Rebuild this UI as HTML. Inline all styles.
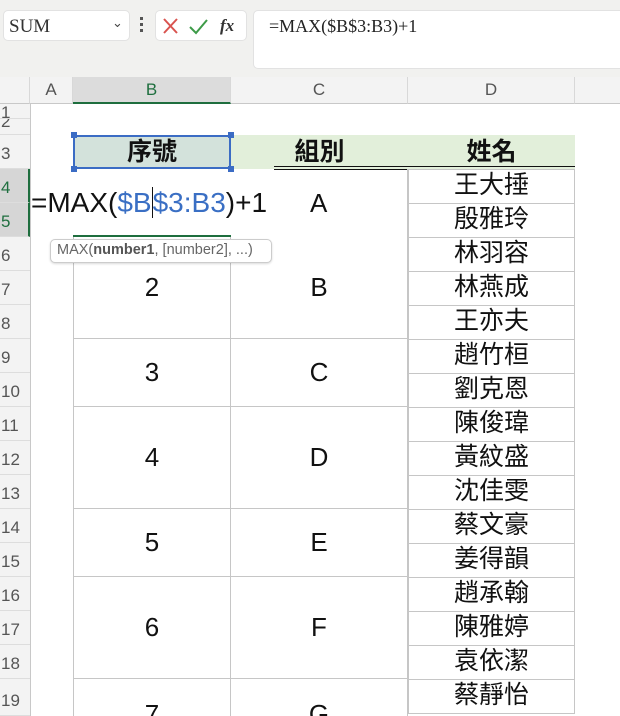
<!DOCTYPE html>
<html style="width:620px;height:716px;overflow:hidden"><head><meta charset="utf-8"><style>
*{margin:0;padding:0;box-sizing:border-box}
body{width:620px;height:716px;overflow:hidden;background:#fff;font-family:"Liberation Sans","Noto Sans CJK TC",sans-serif;position:relative}
.a{position:absolute}
.top{left:0;top:0;width:620px;height:77px;background:#f1f1ef}
.rh{left:0;width:30px;background:#f3f3f3;color:#555;font-size:17px;padding-left:1px;border-bottom:1px solid #ddd;display:flex;align-items:flex-end;padding-bottom:4px;overflow:hidden}
.ch{top:77px;height:27px;background:#f3f3f3;border-right:1px solid #d8d8d8;border-bottom:1px solid #c8c8c8;color:#555;font-size:17px;text-align:center;line-height:26px}
.nm{left:408px;width:167px;height:35px;border:1px solid #c6c6c6;text-align:center;font-size:25px;line-height:30px;color:#111}
.g{border-right:1px solid #c6c6c6;border-bottom:1px solid #c6c6c6;text-align:center;font-size:26px;color:#111;display:flex;align-items:center;justify-content:center}
.hd{top:135px;height:34px;font-size:25px;font-weight:bold;text-align:center;line-height:34px;color:#111}
.hs{width:6px;height:6px;background:#3b6cc4}
</style></head><body>
<div class="a top"></div>
<div class="a" style="left:3px;top:10px;width:127px;height:31px;background:#fff;border-radius:5px;border:1px solid #e2e2e2"></div>
<div class="a" style="left:9px;top:16px;font-family:'Liberation Serif',serif;font-size:19px;color:#333">SUM</div>
<div class="a" style="left:112px;top:15px;font-size:13px;color:#444">&#8964;</div>
<div class="a" style="left:140px;top:17px;width:3px;height:15px;border-left:3px dotted #555"></div>
<div class="a" style="left:155px;top:10px;width:92px;height:31px;background:#fff;border-radius:5px;border:1px solid #e2e2e2"></div>
<svg class="a" style="left:162px;top:16px" width="80" height="20"><path d="M2 3 L15 17 M15 3 L2 17" stroke="#d9534f" stroke-width="2"/><path d="M28 11 L34 17 L45 4" stroke="#3d9b48" stroke-width="2" fill="none"/><text x="58" y="15" font-family="Liberation Serif" font-style="italic" font-weight="bold" font-size="17" fill="#333">fx</text></svg>
<div class="a" style="left:253px;top:10px;width:380px;height:59px;background:#fff;border-radius:5px;border:1px solid #e2e2e2"></div>
<div class="a" style="left:269px;top:16px;font-family:'Liberation Serif',serif;font-size:18px;color:#222">=MAX($B$3:B3)+1</div>

<div class="a" style="left:0;top:77px;width:30px;height:27px;background:#f3f3f3;border-right:1px solid #d8d8d8;border-bottom:1px solid #c8c8c8"></div>
<div class="a ch" style="left:30px;width:43px">A</div>
<div class="a ch" style="left:73px;width:158px;background:#dcdcdc;color:#1f6f3f;border-bottom:2px solid #1e6e3e">B</div>
<div class="a ch" style="left:231px;width:177px">C</div>
<div class="a ch" style="left:408px;width:167px">D</div>
<div class="a ch" style="left:575px;width:45px;border-right:none"></div>

<div class="a rh" style="top:104px;height:15px;align-items:flex-start;padding-bottom:0"><span style="margin-top:-1px">1</span></div>
<div class="a rh" style="top:119px;height:16px;align-items:flex-start;padding-bottom:0"><span style="margin-top:-7px">2</span></div>
<div class="a rh" style="top:135px;height:34px">3</div>
<div class="a rh" style="top:169px;height:34px;background:#d6d6d6;color:#1f6f3f;border-right:2px solid #1e6e3e">4</div>
<div class="a rh" style="top:203px;height:34px;background:#d6d6d6;color:#1f6f3f;border-right:2px solid #1e6e3e">5</div>
<div class="a rh" style="top:237px;height:34px">6</div>
<div class="a rh" style="top:271px;height:34px">7</div>
<div class="a rh" style="top:305px;height:34px">8</div>
<div class="a rh" style="top:339px;height:34px">9</div>
<div class="a rh" style="top:373px;height:34px">10</div>
<div class="a rh" style="top:407px;height:34px">11</div>
<div class="a rh" style="top:441px;height:34px">12</div>
<div class="a rh" style="top:475px;height:34px">13</div>
<div class="a rh" style="top:509px;height:34px">14</div>
<div class="a rh" style="top:543px;height:34px">15</div>
<div class="a rh" style="top:577px;height:34px">16</div>
<div class="a rh" style="top:611px;height:34px">17</div>
<div class="a rh" style="top:645px;height:34px">18</div>
<div class="a rh" style="top:679px;height:37px">19</div>
<div class="a" style="left:30px;top:104px;width:1px;height:612px;background:#c8c8c8"></div>

<div class="a hd" style="left:73px;width:158px;background:#d3e2db">序號</div>
<div class="a hd" style="left:231px;width:177px;background:#e2efda">組別</div>
<div class="a hd" style="left:408px;width:167px;background:#e2efda">姓名</div>
<div class="a" style="left:274px;top:166px;width:301px;height:4px;border-top:1px solid #111;border-bottom:1px solid #111"></div>
<div class="a" style="left:73px;top:135px;width:158px;height:34px;border:2px solid #3b6cc4"></div>
<div class="a hs" style="left:71px;top:132px"></div><div class="a hs" style="left:228px;top:132px"></div>
<div class="a hs" style="left:71px;top:166px"></div><div class="a hs" style="left:228px;top:166px"></div>

<div class="a g" style="left:73px;top:237px;width:158px;height:102px;border-left:1px solid #c6c6c6">2</div>
<div class="a g" style="left:231px;top:237px;width:177px;height:102px">B</div>
<div class="a g" style="left:73px;top:339px;width:158px;height:68px;border-left:1px solid #c6c6c6">3</div>
<div class="a g" style="left:231px;top:339px;width:177px;height:68px">C</div>
<div class="a g" style="left:73px;top:407px;width:158px;height:102px;border-left:1px solid #c6c6c6">4</div>
<div class="a g" style="left:231px;top:407px;width:177px;height:102px">D</div>
<div class="a g" style="left:73px;top:509px;width:158px;height:68px;border-left:1px solid #c6c6c6">5</div>
<div class="a g" style="left:231px;top:509px;width:177px;height:68px">E</div>
<div class="a g" style="left:73px;top:577px;width:158px;height:102px;border-left:1px solid #c6c6c6">6</div>
<div class="a g" style="left:231px;top:577px;width:177px;height:102px">F</div>
<div class="a g" style="left:73px;top:679px;width:158px;height:37px;border-left:1px solid #c6c6c6;border-bottom:none;align-items:flex-start;padding-top:20px">7</div>
<div class="a g" style="left:231px;top:679px;width:177px;height:37px;border-bottom:none;align-items:flex-start;padding-top:20px">G</div>
<div class="a" style="left:231px;top:169px;width:177px;height:68px;border-right:1px solid #c6c6c6"></div>
<div class="a" style="left:310px;top:188px;font-size:26px;color:#111">A</div>

<div class="a nm" style="top:169px">王大捶</div>
<div class="a nm" style="top:203px">殷雅玲</div>
<div class="a nm" style="top:237px">林羽容</div>
<div class="a nm" style="top:271px">林燕成</div>
<div class="a nm" style="top:305px">王亦夫</div>
<div class="a nm" style="top:339px">趙竹桓</div>
<div class="a nm" style="top:373px">劉克恩</div>
<div class="a nm" style="top:407px">陳俊瑋</div>
<div class="a nm" style="top:441px">黃紋盛</div>
<div class="a nm" style="top:475px">沈佳雯</div>
<div class="a nm" style="top:509px">蔡文豪</div>
<div class="a nm" style="top:543px">姜得韻</div>
<div class="a nm" style="top:577px">趙承翰</div>
<div class="a nm" style="top:611px">陳雅婷</div>
<div class="a nm" style="top:645px">袁依潔</div>
<div class="a nm" style="top:679px">蔡靜怡</div>

<div class="a" style="left:73px;top:235px;width:158px;height:2px;background:#1e6e3e"></div>
<div class="a" style="left:31px;top:187px;font-size:28px;color:#111;white-space:nowrap;background:#fff">=MAX(<span style="color:#3a6fc4">$B<span style="border-left:1px solid #111"></span>$3:B3</span>)+1</div>
<div class="a" style="left:50px;top:239px;width:222px;height:24px;background:#fff;border:1px solid #ccc;border-radius:5px;box-shadow:0 1px 2px rgba(0,0,0,.15);font-size:14.5px;color:#666;line-height:21px;padding-left:6px;white-space:nowrap">MAX(<b style="color:#555">number1</b>, [number2], ...)</div>
</body></html>
